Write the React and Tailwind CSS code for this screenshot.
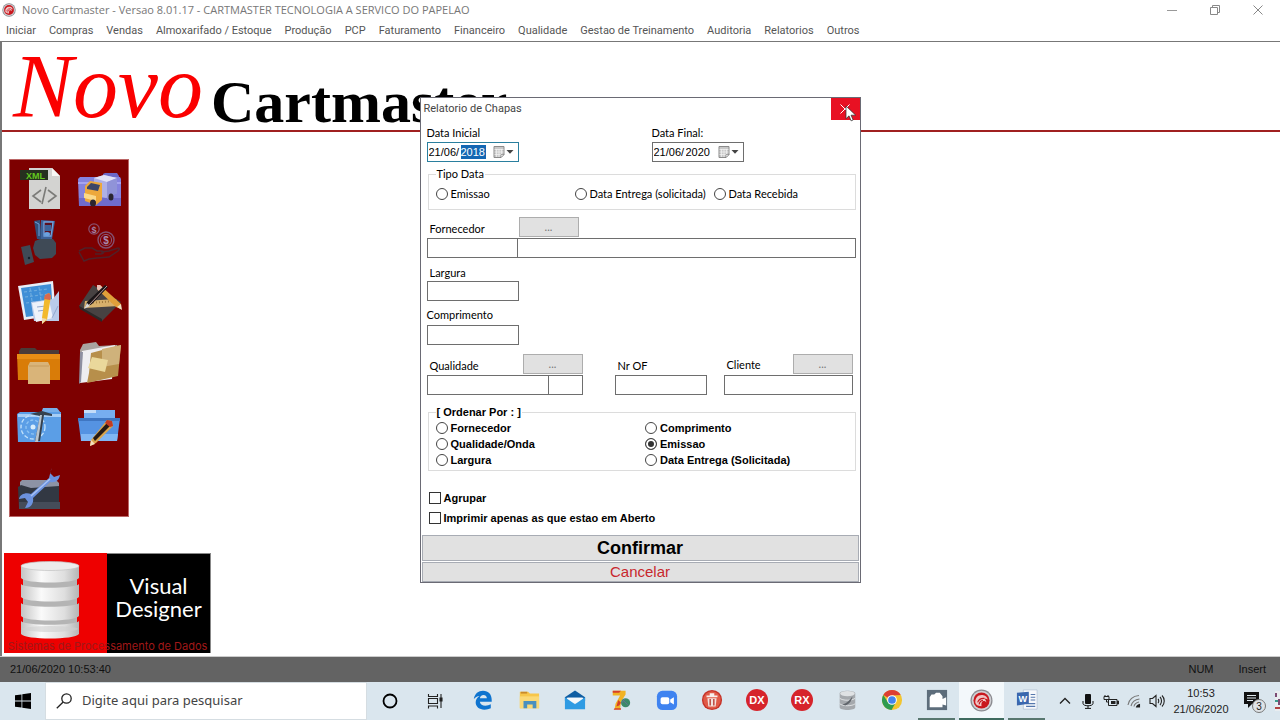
import React from "react";

const MENU = [
  "Iniciar", "Compras", "Vendas", "Almoxarifado / Estoque", "Produção", "PCP", "Faturamento",
  "Financeiro", "Qualidade", "Gestao de Treinamento", "Auditoria", "Relatorios", "Outros",
];

const UI_FONT = "font-['Open_Sans','Noto_Sans',sans-serif]";

/* ---------- application chrome ---------- */

function AppBadge({ className }) {
  return (
    <svg viewBox="0 0 24 24" className={className} aria-hidden="true">
      <circle cx="12" cy="12" r="11.500" fill="#8b8b90" />
      <circle cx="12" cy="12" r="10.200" fill="#d0d0d4" />
      <circle cx="12" cy="12" r="8.400" fill="#c9181e" />
      <path d="M5.500 14C5.500 8.500 9 5.500 14 6.500c2.500.5 4 2 4.500 4.500c-1.500-1-3-1.400-4.500-1c2 .6 3 2 3 4c-1-1.200-2.400-1.800-3.600-1.200c-1.200.6-1.800 2.200-1.400 5.200C8 17.500 6 16.500 5.500 14z" fill="#f0c6c6" />
      <path d="M8 14c1-3 3.500-4.500 7-4.200M9.500 16c.5-2.500 2-4 4-4.200" stroke="#c4161c" strokeWidth="1.200" fill="none" />
    </svg>
  );
}

function TitleBar() {
  return (
    <header className="flex h-5 items-center justify-between bg-white pl-0.5">
      <div className="flex items-center gap-1.5 text-[#777]">
        <AppBadge className="size-3.5" />
        <h1 className="text-[11px] leading-4">
          Novo Cartmaster - Versao 8.01.17 - CARTMASTER TECNOLOGIA A SERVICO DO PAPELAO
        </h1>
      </div>
      <div className="flex pr-px">
        <button aria-label="Minimizar" className="flex h-5 w-[43px] items-center justify-center">
          <svg viewBox="0 0 12 12" className="size-3"><path d="M1 6.500h10" stroke="#999" /></svg>
        </button>
        <button aria-label="Restaurar" className="flex h-5 w-[43px] items-center justify-center">
          <svg viewBox="0 0 12 12" className="size-3" fill="none" stroke="#888">
            <path d="M1.500 3.500h7v7h-7zM3.500 3.500v-2h7v7h-2" />
          </svg>
        </button>
        <button aria-label="Fechar" className="flex h-5 w-[43px] items-center justify-center">
          <svg viewBox="0 0 12 12" className="size-3"><path d="M1.500 1.500l9 9M10.500 1.500l-9 9" stroke="#888" /></svg>
        </button>
      </div>
    </header>
  );
}

function MenuBar() {
  return (
    <nav className="flex h-[21px] items-center gap-[13px] bg-white pl-1.5 font-[Roboto,sans-serif] text-[11px] text-[#555]">
      {MENU.map((m) => (
        <button key={m} className="whitespace-nowrap leading-4">{m}</button>
      ))}
    </nav>
  );
}

/* ---------- side panel ---------- */

const SIDE_ICONS = [
  ["XML", (
    <g>
      <path d="M19 8h23l8 8v33H19z" fill="#d3d3d1" />
      <path d="M42 8l8 8h-8z" fill="#f7f7f5" />
      <path d="M31 30l-8 6 8 6M38 30l8 6-8 6M36 27l-4 17" fill="none" stroke="#7b7b78" strokeWidth="1.600" />
      <rect x="10" y="10" width="28" height="10" fill="#26301f" />
      <text x="16" y="18.500" fontSize="9" fontWeight="700" fill="#63c81e">XML</text>
    </g>
  )],
  ["Entregas", (
    <g>
      <path d="M34 18v-4l2-1h12l2 3v3z" fill="#6c68c8" />
      <path d="M9 19l2-2h40l1 2v27H10z" fill="#8583de" />
      <path d="M9 22h43v2H9z" fill="#a6a4f0" />
      <path d="M10 38h42v8H10z" fill="#6f6ccc" />
      <path d="M25 18l10-3 13 3v15l-11 5-12-3z" fill="#aeb0e6" />
      <path d="M25 18l10-3 13 3-10 4z" fill="#e2e2f7" />
      <path d="M38 22v17l10-6V18z" fill="#9093d8" />
      <path d="M16 26l5-5 12 2v17l-6 5-11-4z" fill="#eda83c" />
      <path d="M18 27l4-4 9 2-2 6-11-2z" fill="#3d4667" />
      <path d="M15 33l12 3v5l-12-3z" fill="#fbd98a" />
      <ellipse cx="24" cy="43" rx="3" ry="3.500" fill="#2a2530" />
      <ellipse cx="42" cy="37" rx="2.500" ry="3.500" fill="#2a2530" />
    </g>
  )],
  ["Pagamentos", (
    <g>
      <path d="M24 2l6-1 2 19h-5z" fill="#31507c" />
      <path d="M25 3l4 2v12" fill="none" stroke="#6d9edb" />
      <path d="M31 1l14 1-3 18H31z" fill="#3c6299" />
      <path d="M34 3h9l-2 14h-7z" fill="#5c1020" stroke="#71a1db" strokeWidth="1.300" />
      <path d="M35 6h6v6h-6z" fill="#3c6299" />
      <ellipse cx="37" cy="15" rx="3" ry="2" fill="#69a2e2" />
      <path d="M25 22l5-2h13l3 4v11l-4 4-12 1-5-4-2-7z" fill="#3f4a56" />
      <path d="M11 28l9-2 4 17-9 3z" fill="#3f4a56" />
      <circle cx="19" cy="39" r="1.200" fill="#16202c" />
    </g>
  )],
  ["Recebimentos", (
    <g fill="none">
      <circle cx="25" cy="10" r="5.200" stroke="#8a4e6c" strokeWidth="1.200" />
      <text x="22.500" y="13.500" fontSize="9" fontWeight="700" fill="#a283a8">$</text>
      <circle cx="37" cy="21" r="8" stroke="#84506f" strokeWidth="1.400" />
      <circle cx="37" cy="21" r="5.600" stroke="#8a5676" />
      <text x="34.300" y="24.500" fontSize="10" fontWeight="700" fill="#a98cb0">$</text>
      <path d="M10 32l6-3h7l5 3h5c3 1 1 3-1 3h-6M32 33l8-1 9-3c2 0 1 2 0 3l-9 6-12 1-8 1-5 2-5-9" stroke="#4f2128" strokeWidth="1.500" />
    </g>
  )],
  ["Projetos", (
    <g>
      <path d="M8 8l35-5 3 34-32 5z" fill="#e9eff8" />
      <path d="M11 10l30-4 2 29-27 4z" fill="#3f8ed6" />
      <path d="M14 14l24-3M15 19l24-3M16 25l24-3M20 10l4 26M29 9l4 26" stroke="#6dacdf" strokeWidth="1.200" strokeDasharray="3 2" />
      <path d="M21 24l22-3 6-8v30H24z" fill="#b9cbea" />
      <path d="M22 25l17-3 4 18-17 4z" fill="#eef2fa" />
      <path d="M27 29l9-1M28 33l8-1M42 40l6-12" stroke="#91a8ce" />
      <path d="M35 17l4-2 2 3-4 24-5 4 0-6z" fill="#f2b92d" />
      <path d="M35 17l4-2 2 3-1 4-6-1z" fill="#d8694e" />
      <path d="M32 40l5 1-5 5z" fill="#eedab0" />
    </g>
  )],
  ["Desenho", (
    <g>
      <path d="M10 28L24 7l28 17-19 19z" fill="#474242" />
      <path d="M10 28l23 13v3L11 31z" fill="#2b2828" />
      <path d="M16 23l31-2 3 7-35 2z" fill="#d8b06b" />
      <path d="M18 25l30-2" stroke="#a07a3e" strokeDasharray="1 2" strokeWidth="2" />
      <path d="M28 7h3l21 19v5l-5-2L28 11z" fill="#e0a03a" />
      <path d="M28 7h3l3 3-4 3-2-2z" fill="#e9bdb3" />
      <path d="M48 29l4-3 1 6z" fill="#efe1c0" />
      <path d="M36 7l3 2-16 17-7 4 2-6z" fill="#1a1517" />
      <path d="M38 8L20 27" stroke="#b99a98" strokeWidth="1" />
      <path d="M15 31l3-6 3 3z" fill="#d8d8d8" />
    </g>
  )],
  ["Estoque", (
    <g>
      <path d="M9 14l2-3h14l2 2h22v6H9z" fill="#4a3b38" />
      <path d="M7 17h43v26H8z" fill="#d97c08" />
      <path d="M7 17h43v5H7z" fill="#e88d14" />
      <path d="M20 25h18l2 4v18H18V29z" fill="#d9b479" />
      <path d="M19 29h20" stroke="#c59c5e" strokeWidth="1" />
    </g>
  )],
  ["Arquivos", (
    <g>
      <path d="M11 13l3-6 13-2 3 4 18-1 2 4-38 30z" fill="#a9a4a0" />
      <path d="M13 14l33-6-3 34-32 4z" fill="#eeeef1" />
      <path d="M22 16l30-8-3 31-31 7 2-10z" fill="#b78f4b" />
      <path d="M33 12l19-4-2 19-17 3z" fill="#cfb27b" />
      <path d="M23 20l16 3-3 12-17-4z" fill="#ead89b" />
      <path d="M11 15h3l-2 30-2 2z" fill="#8d8fa0" />
    </g>
  )],
  ["Aplicativos", (
    <g>
      <path d="M31 17l2-5h14l4 5z" fill="#77aee8" />
      <path d="M7 18l3-2h41v30H8z" fill="#5b9ee6" />
      <path d="M8 18h43v3H8z" fill="#a6cdf5" />
      <circle cx="23" cy="31" r="12" fill="none" stroke="#bfe0fb" strokeWidth="1.400" strokeDasharray="4 2" />
      <circle cx="23" cy="31" r="7" fill="none" stroke="#8fc4f3" strokeWidth="1.400" strokeDasharray="3 2" />
      <circle cx="23" cy="31" r="2.500" fill="#d8edfc" />
      <path d="M20 18l12-3 10 3v2l-8-1-4 26h-5l5-25z" fill="#36414e" />
      <path d="M32 19l-4 27h-3l5-27z" fill="#b8c4cf" />
    </g>
  )],
  ["Editar", (
    <g>
      <path d="M15 14h31v12H15z" fill="#77aef0" />
      <path d="M15 14h12v3H15z" fill="#c4dcf8" />
      <path d="M9 22h42l-3 23H12z" fill="#5593e2" />
      <path d="M9 22h42v3H9z" fill="#3f76c2" />
      <path d="M12 38h37l-1 7H12z" fill="#80b6f3" />
      <path d="M38 24l5 1 1 5-17 17-6 3 1-6z" fill="#dba54b" />
      <path d="M38 27l3 3-15 15-2-3z" fill="#251b15" />
      <path d="M38 24l5 1 1 5-3 1-5-4z" fill="#c23b24" />
      <path d="M22 44l4 4-5 2z" fill="#f3dfba" />
    </g>
  )],
  ["Ferramentas", (
    <g>
      <path d="M10 27l2-2h34l3 3v7H10z" fill="#8d93a5" />
      <path d="M8 32l3-2 10 3 28-2v23H9z" fill="#323843" />
      <path d="M9 47h41v7H9z" fill="#454c59" />
      <path d="M41 15l-2 8-18 16c-5-2-11 0-12 5l6-1 3 4-3 6c6 0 9-5 8-10l17-16c6 1 9-2 10-7l-6 2-4-4 2-5z" fill="#6c92df" />
      <path d="M40 24L21 41" stroke="#a9c2f3" strokeWidth="1.500" />
    </g>
  )],
];

function SidePanel() {
  return (
    <aside className="ml-[7px] mt-[27px] w-[120px] border border-[#b66] bg-[#7d0000] pb-0.5">
      <div className="grid grid-cols-2">
        {SIDE_ICONS.map(([label, art]) => (
          <button key={label} aria-label={label}>
            <svg viewBox="0 0 59 59" className="block size-[59px]" fontFamily="Liberation Sans, sans-serif">{art}</svg>
          </button>
        ))}
      </div>
    </aside>
  );
}

const DISKS = [2, 21, 40, 58];

function VendorLogo() {
  return (
    <div className="relative ml-0.5 mt-9 flex h-[100px] w-[207px]">
      <div className="flex w-[103px] justify-center bg-[#ee0000] pr-3 pt-2">
        <svg viewBox="0 0 60 78" className="h-[78px] w-[60px]" aria-hidden="true">
          <defs>
            <linearGradient id="cyl" x1="0" x2="1" y1="0" y2="0">
              <stop offset="0" stopColor="#c4c4c4" />
              <stop offset="0.350" stopColor="#fafafa" />
              <stop offset="0.750" stopColor="#dedede" />
              <stop offset="1" stopColor="#b5b5b5" />
            </linearGradient>
          </defs>
          <path d="M3 6h54v64H3z" fill="#b4b4b4" />
          {DISKS.map((y) => (
            <path key={y} d={`M1 ${y + 2}v13c4 6 54 6 58 0v-13c-4 5-54 5-58 0z`} fill="url(#cyl)" />
          ))}
          <ellipse cx="30" cy="5" rx="29" ry="4.500" fill="#ececec" stroke="#c2c2c2" strokeWidth="0.700" />
          <ellipse cx="30" cy="68" rx="28" ry="3" fill="#cfcfcf" opacity="0.600" />
        </svg>
      </div>
      <div className="flex-1 border-r border-t border-[#888] bg-black pt-5 text-center font-[Lato,sans-serif] text-[22px] leading-[23px] text-white">
        Visual<br />Designer
      </div>
      <p className="absolute inset-x-0 bottom-0 whitespace-nowrap text-center font-[Inter,sans-serif] text-[11px] leading-[14px] text-[#a01818]">
        Sistemas de Processamento de Dados
      </p>
    </div>
  );
}

/* ---------- report dialog ---------- */

const BOX = "h-5 border border-[#6e6e6e] bg-white px-1 outline-none";

function LookupButton({ label }) {
  return (
    <button aria-label={label} className="h-5 w-[60px] border border-[#adadad] bg-[#e1e1e1] text-[11px] leading-4 text-[#777]">
      ...
    </button>
  );
}

function DateField({ id, label, year, active }) {
  return (
    <div>
      <label htmlFor={id} className="block pb-0.5 leading-[14px]">{label}</label>
      <div className={`flex h-5 w-[92px] items-center border bg-white pl-px font-['Liberation_Sans',sans-serif] ${active ? "border-[#2a7f9e]" : "border-[#6e6e6e]"}`}>
        <input id={id} defaultValue="21/06/" className="w-8 outline-none" />
        <input
          aria-label={`${label} ano`}
          defaultValue={year}
          className={`h-3.5 w-[25px] outline-none ${active ? "bg-[#1467b3] text-white" : ""}`}
        />
        <button aria-label="Abrir calendario" className="ml-[7px] flex items-center gap-px">
          <svg viewBox="0 0 12 12" className="size-3">
            <path d="M1 .5h10v8l-3 3H1z" fill="#c9c9c9" stroke="#8b8b8b" />
            <path d="M1.500 3.500h9M1.500 6h9M1.500 8.500h7M3.500 3v8M6 3v8M8.500 3v6" stroke="#f3f3f3" strokeWidth="0.700" />
            <path d="M8 11.500v-3h3z" fill="#fff" stroke="#777" strokeWidth="0.600" />
          </svg>
          <svg viewBox="0 0 8 8" className="size-2"><path d="M.5 2h7L4 5.800z" fill="#444" /></svg>
        </button>
      </div>
    </div>
  );
}

function Radio({ name, children, defaultChecked, className = "" }) {
  return (
    <label className={`flex h-4 items-center gap-[3px] whitespace-nowrap ${className}`}>
      <input
        type="radio"
        name={name}
        defaultChecked={defaultChecked}
        className="size-3 shrink-0 appearance-none rounded-full border border-[#444] bg-white checked:bg-[#333] checked:shadow-[inset_0_0_0_2px_#fff]"
      />
      {children}
    </label>
  );
}

function Check({ children }) {
  return (
    <label className="flex h-5 items-center gap-[3px]">
      <input type="checkbox" className="size-3 appearance-none border border-[#333] bg-white checked:bg-[#333]" />
      {children}
    </label>
  );
}

function ReportDialog() {
  return (
    <section role="dialog" aria-label="Relatorio de Chapas" className="w-[441px] border border-[#6a6a74] bg-white font-[Lato,sans-serif] text-[11px] leading-[14px] text-black">
      <div className="flex h-[22px] items-center justify-between">
        <h2 className="pl-[3px] font-[Roboto,sans-serif] text-[11px] text-[#444]">Relatorio de Chapas</h2>
        <button aria-label="Fechar janela" className="relative flex h-[22px] w-[29px] items-center justify-center bg-[#e81123]">
          <svg viewBox="0 0 10 10" className="size-2.5"><path d="M.5 .5l9 9M9.500 .5l-9 9" stroke="#fff" /></svg>
          <svg viewBox="0 0 12 18" className="absolute left-[14px] top-[7px] h-[17px] w-3" aria-hidden="true">
            <path d="M.7 1v13.500l3.200-3 2.200 5.300 2.200-1-2.200-5H11z" fill="#fff" stroke="#333" strokeWidth="0.800" />
          </svg>
        </button>
      </div>

      <form className="flex flex-col pl-1.5 pr-1 pt-1.5" onSubmit={(e) => e.preventDefault()}>
        <div className="flex gap-[133px]">
          <DateField id="ini" label="Data Inicial" year="2018" active />
          <DateField id="fim" label="Data Final:" year="2020" />
        </div>

        <fieldset className="ml-px mt-[5px] h-[43px] border border-[#dcdcdc] pl-[7px]">
          <legend className="px-px">Tipo Data</legend>
          <div className="flex pt-[5px]">
            <Radio name="tipo" className="w-[139px]">Emissao</Radio>
            <Radio name="tipo" className="w-[139px]">Data Entrega (solicitada)</Radio>
            <Radio name="tipo">Data Recebida</Radio>
          </div>
        </fieldset>

        <div className="mt-[7px] flex h-[21px]">
          <label htmlFor="forn" className="w-[92px] pl-[3px] pt-[5px]">Fornecedor</label>
          <LookupButton label="Buscar fornecedor" />
        </div>
        <div className="flex">
          <input id="forn" className={`${BOX} w-[91px]`} />
          <input aria-label="Nome do fornecedor" className={`${BOX} -ml-px min-w-0 flex-1`} />
        </div>

        <label htmlFor="larg" className="mt-2 pb-px pl-[3px]">Largura</label>
        <input id="larg" className={`${BOX} w-[92px]`} />

        <label htmlFor="comp" className="mt-[7px] pb-[3px]">Comprimento</label>
        <input id="comp" className={`${BOX} w-[92px]`} />

        <div className="mt-[9px] flex">
          <div className="w-[188px]">
            <div className="flex h-[21px] w-[156px] justify-between">
              <label htmlFor="qual" className="pl-[3px] pt-[5px]">Qualidade</label>
              <LookupButton label="Buscar qualidade" />
            </div>
            <div className="flex w-[156px]">
              <input id="qual" className={`${BOX} w-[122px]`} />
              <input aria-label="Onda" className={`${BOX} -ml-px min-w-0 flex-1`} />
            </div>
          </div>
          <div className="w-[109px]">
            <label htmlFor="of" className="block h-[21px] pl-[3px] pt-[5px]">Nr OF</label>
            <input id="of" className={`${BOX} w-[92px]`} />
          </div>
          <div className="w-[129px]">
            <div className="flex h-[21px] justify-between">
              <label htmlFor="cli" className="pl-[3px] pt-1">Cliente</label>
              <LookupButton label="Buscar cliente" />
            </div>
            <input id="cli" className={`${BOX} w-full`} />
          </div>
        </div>

        <fieldset className="ml-px mt-2.5 h-[66px] border border-[#dcdcdc] pl-[7px] font-['Liberation_Sans',sans-serif] font-bold">
          <legend className="px-px">[ Ordenar Por : ]</legend>
          <div className="grid grid-cols-2 pt-px">
            <Radio name="ord">Fornecedor</Radio>
            <Radio name="ord">Comprimento</Radio>
            <Radio name="ord">Qualidade/Onda</Radio>
            <Radio name="ord" defaultChecked>Emissao</Radio>
            <Radio name="ord">Largura</Radio>
            <Radio name="ord">Data Entrega (Solicitada)</Radio>
          </div>
        </fieldset>

        <div className="mt-[17px] pb-[7px] pl-0.5 font-['Liberation_Sans',sans-serif] font-bold">
          <Check>Agrupar</Check>
          <Check>Imprimir apenas as que estao em Aberto</Check>
        </div>
      </form>

      <div className="flex flex-col gap-px px-px font-['Liberation_Sans',sans-serif]">
        <button className="h-[26px] border border-[#a8acb4] bg-[#e1e1e1] text-[18px] font-bold leading-6">Confirmar</button>
        <button className="h-5 border border-[#a8acb4] bg-[#e1e1e1] text-[15px] leading-[18px] text-[#c8282d]">Cancelar</button>
      </div>
    </section>
  );
}

/* ---------- task bar ---------- */

const LAUNCHERS = [
  ["Edge", (
    <path d="M2 11C3 5 7 2 12 2c6 0 9.500 4 9.500 10v2H8.500c.5 3 3 4.300 6 4.300 2.300 0 4.300-.6 6-1.600v4.300c-2 1-4.300 1.500-7 1.500C8 22.500 4 19.500 4 14.500c0-3 1.600-5.500 4.200-7C5.500 7.800 3.500 9 2 11zm6.600-.8h7.600c0-2.300-1.300-3.700-3.600-3.700S8.900 8 8.600 10.200z" fill="#0f74cf" />
  )],
  ["Explorador", (
    <g>
      <path d="M2 3h9l2 2h10v16H2z" fill="#f7c64a" /><path d="M3 3h7v2H3z" fill="#c98a2b" />
      <path d="M2 8h21v13H2z" fill="#fbd976" />
      <path d="M6 13h14v8h-4v-4h-6v4H6z" fill="#4a90bf" />
    </g>
  )],
  ["Email", (
    <g>
      <path d="M1 9L12 1.500 23 9v4H1z" fill="#0f5da2" /><path d="M3 9.500h18V15H3z" fill="#f5f8fb" />
      <path d="M1 9l11 7.500L23 9v13H1z" fill="#2f9be3" /><path d="M4 9.500h16l-8 6z" fill="#f5f8fb" />
    </g>
  )],
  ["Sete", (
    <g>
      <path d="M3 2h14v4l-5 8-1 8H5l1-6 5-9H3z" fill="#f1b323" />
      <path d="M3 2h9l-2 2H3zM9 12l3 3-2 3-3 1zM5 21h7v1.500H4z" fill="#d6402a" />
      <circle cx="17" cy="15" r="5" fill="#3d8a69" /><path d="M14 12l6 6M16 11l-3 4" stroke="#6a6f98" />
    </g>
  )],
];

const APPS = [
  ["Zoom", (
    <g>
      <rect x="1" y="2" width="22" height="21" rx="6" fill="#3f83f0" />
      <rect x="5" y="9" width="9.500" height="7.500" rx="2" fill="#fff" /><path d="M15.500 11.500l4-2.500v8l-4-2.500z" fill="#fff" />
    </g>
  )],
  ["Lixeira", (
    <g>
      <circle cx="12" cy="12" r="11" fill="#c53127" /><circle cx="12" cy="12" r="9.500" fill="#e05a47" />
      <path d="M6 7h12v2H6zM9.500 4.500h5V7h-5z" fill="#f7efec" />
      <path d="M7 10h10l-1 9H8z" fill="#f3e2dd" /><path d="M10 11v7M14 11v7" stroke="#b63a30" strokeWidth="1.500" />
    </g>
  )],
  ["DX", (
    <g>
      <circle cx="12" cy="12" r="12" fill="#d6242b" />
      <text x="12" y="16" textAnchor="middle" fontSize="12" fontWeight="700" fill="#fff">DX</text>
    </g>
  )],
  ["RX", (
    <g>
      <circle cx="12" cy="12" r="12" fill="#d6242b" />
      <text x="12" y="16" textAnchor="middle" fontSize="12" fontWeight="700" fill="#fff">RX</text>
    </g>
  )],
  ["Banco de dados", (
    <g>
      <path d="M4 5c0-4 17-4 17 0v15c0 4-17 4-17 0z" fill="#a5a9ad" />
      <ellipse cx="12.500" cy="5" rx="8" ry="2.800" fill="#dfe2e4" />
      <path d="M4 10c3 3 14 3 17 0M4 16c3 3 14 3 17 0" stroke="#e3e5e7" fill="none" />
      <path d="M7 17c4-1 8-4 11-9-1 6-4 9-8 10z" fill="#60656b" />
    </g>
  )],
  ["Chrome", (
    <g>
      <circle cx="12" cy="12" r="11" fill="#f2c52f" />
      <path d="M12 12L2.500 6.500A11 11 0 0 1 21.500 6.500L12 7z" fill="#dc3f33" />
      <path d="M2.500 6.500A11 11 0 0 0 11.500 23L16.500 14 12 12 7.500 14.500z" fill="#2e9b50" />
      <circle cx="12" cy="12" r="5.300" fill="#fff" /><circle cx="12" cy="12" r="4.200" fill="#4384ee" />
    </g>
  )],
  ["Gravador", (
    <g>
      <path d="M1 1h22v22H1z" fill="#5d6d7b" />
      <path d="M4 9l2-3h3l2-2h4l3 4v3l4-2v9l-4-1v3H4z" fill="#fff" />
    </g>
  ), "run"],
  ["Cartmaster", null, "active"],
  ["Word", (
    <g>
      <path d="M8 1h15v21H8z" fill="#f6f8fb" stroke="#a9b8d0" strokeWidth="0.700" />
      <path d="M16 6h5M16 9h5M16 12h5M11 16h10M11 19h10" stroke="#5577ad" strokeWidth="1.300" />
      <path d="M1 4l13-1v13L1 18z" fill="#3b67ae" />
      <text x="7.500" y="14" textAnchor="middle" fontSize="10" fontWeight="700" fill="#fff">W</text>
    </g>
  ), "run"],
];

const STATE = {
  run: "border-b-2 border-[#58776f]",
  active: "border-b-2 border-[#3f6b5f] bg-[#f3f8fb]",
};

function TaskButton({ label, art, state, width }) {
  const pad = state === "active" ? "" : "px-1";
  return (
    <button aria-label={label} className={`flex h-full items-center justify-center ${pad} ${width}`}>
      <span className={`flex h-full w-full items-center justify-center ${STATE[state] || "border-b-2 border-transparent"}`}>
        {art ? (
          <svg viewBox="0 0 24 24" className="size-[22px]" fontFamily="Liberation Sans, sans-serif">{art}</svg>
        ) : (
          <AppBadge className="size-[23px]" />
        )}
      </span>
    </button>
  );
}

function TaskBar() {
  return (
    <footer className="flex h-[38px] items-stretch bg-[#dae6ee] text-[#222]">
      <button aria-label="Iniciar Windows" className="flex w-[45px] items-center justify-center">
        <svg viewBox="0 0 16 16" className="size-4"><path d="M0 2.300l6.500-.9v6.200H0zM7.300 1.300L16 0v7.600H7.300zM0 8.400h6.500v6.200L0 13.700zM7.300 8.400H16V16l-8.700-1.300z" fill="#000" /></svg>
      </button>
      <label className="flex w-[322px] items-center gap-2.5 border border-[#d5dde2] bg-white pl-2.5">
        <svg viewBox="0 0 16 16" className="size-4 shrink-0" fill="none" stroke="#222" strokeWidth="1.300">
          <circle cx="10.500" cy="5.500" r="4.700" /><path d="M7.200 9L.8 15.300" />
        </svg>
        <input
          aria-label="Pesquisar"
          placeholder="Digite aqui para pesquisar"
          className="min-w-0 flex-1 font-['Noto_Sans',sans-serif] text-[13px] outline-none placeholder:text-[#444]"
        />
      </label>
      <button aria-label="Cortana" className="flex w-[46px] items-center justify-center">
        <svg viewBox="0 0 16 16" className="size-4"><circle cx="8" cy="8" r="6.500" fill="none" stroke="#000" strokeWidth="1.800" /></svg>
      </button>
      <button aria-label="Visao de tarefas" className="mr-[3px] flex w-11 items-center justify-center">
        <svg viewBox="0 0 16 16" className="size-4" fill="none" stroke="#222" strokeWidth="1.100">
          <path d="M1.500 1v2.500h9V1M1.500 5.500h9v5h-9zM1.500 15.500V13h9v2.500M14 1v14" /><path d="M13 5h2v3h-2z" fill="#222" />
        </svg>
      </button>
      {LAUNCHERS.map(([label, art]) => (
        <TaskButton key={label} label={label} art={art} width="w-[46px]" />
      ))}
      {APPS.map(([label, art, state]) => (
        <TaskButton key={label} label={label} art={art} state={state} width="w-[45px]" />
      ))}

      <div className="ml-auto flex items-center">
        <button aria-label="Mostrar icones ocultos" className="mr-2.5">
          <svg viewBox="0 0 12 12" className="size-3"><path d="M1 8.500l5-5 5 5" fill="none" stroke="#222" strokeWidth="1.300" /></svg>
        </button>
        <svg viewBox="0 0 14 16" className="mr-2 h-4 w-3.5" aria-label="Microfone">
          <rect x="4" y="1" width="6" height="10" rx="1" fill="#111" />
          <path d="M2 8v2.500c0 3 10 3 10 0V8M7 13v2M4 15.400h6" fill="none" stroke="#111" />
        </svg>
        <svg viewBox="0 0 16 14" className="mr-2 h-3.5 w-4" aria-label="Bateria">
          <path d="M5.500 5.500h8.500v6H5.500zM14.500 7h1v3h-1z" fill="none" stroke="#222" /><path d="M8 7h4.500v3H8z" fill="#222" />
          <path d="M1 2.500h5v3H1zM2 1v2M5 1v2M3.500 5v3h2" fill="none" stroke="#222" />
        </svg>
        <svg viewBox="0 0 14 14" className="mr-2 size-3.5" aria-label="Rede" fill="none" stroke="#777" strokeWidth="1.100">
          <path d="M1 11C2 5.500 6 2 12 1.500M4 12c1-4 4-6.500 8.500-7M7 12.500c.5-2.500 2.500-4 5-4.500" /><path d="M9.500 13c.3-1.500 1.300-2.200 3-2.500v2.500z" fill="#222" stroke="#222" />
        </svg>
        <svg viewBox="0 0 16 14" className="mr-2 h-3.5 w-4" aria-label="Volume" fill="none" stroke="#222" strokeWidth="1.100">
          <path d="M1 4.500h2.500L7 1.500v11L3.500 9.500H1zM9 5c1 1 1 3 0 4M11 3c2 2 2 6 0 8M13 1.500c3 3 3 8 0 11" />
        </svg>
        <div className="w-14 text-center font-['Liberation_Sans',sans-serif] text-[11px] leading-4">
          <time className="block">10:53</time>
          <time className="block">21/06/2020</time>
        </div>
        <button aria-label="Notificacoes" className="ml-3.5 mr-2">
          <svg viewBox="0 0 24 24" className="size-6" fontFamily="Liberation Sans, sans-serif">
            <path d="M1 3h15v12H9l-4 4v-4H1z" fill="#111" /><path d="M4 6.500h9M4 9h9M4 11.500h6" stroke="#dfe9ef" />
            <circle cx="16" cy="17" r="6.500" fill="#dfe3e6" stroke="#777" />
            <text x="16" y="20.500" textAnchor="middle" fontSize="10" fill="#222">3</text>
          </svg>
        </button>
        <svg viewBox="0 0 5 20" className="h-5 w-[5px]" aria-hidden="true">
          <path d="M0 0h5v20H0z" fill="#e9edf0" /><path d="M0 2h2v4H0zM3 8h2v6H3z" fill="#7c4b74" /><path d="M0 9h3v2H0z" fill="#3b9a8a" /><path d="M0 16h5v2H0z" fill="#b04343" />
        </svg>
      </div>
    </footer>
  );
}

export default function App() {
  return (
    <div className={`relative flex min-h-screen flex-col overflow-hidden bg-white ${UI_FONT}`}>
      <TitleBar />
      <MenuBar />
      <main className="flex-1 border-l-2 border-t border-[#777] bg-white pb-[3px]">
        <div className="flex h-[90px] items-start border-b-2 border-[#a02020] pl-[11px] font-['Liberation_Serif',serif]">
          <span className="text-[90px] italic leading-[90px] text-[#fb0000]">Novo</span>
          <span className="ml-2 pt-[30px] text-[60px] font-bold leading-[60px] text-black">Cartmaster</span>
        </div>
        <SidePanel />
        <VendorLogo />
      </main>
      <div className="flex h-[26px] items-center border-t border-[#ccc] bg-[#636363] pl-2.5 pr-3.5 font-['Liberation_Sans',sans-serif] text-[11px] text-[#111]">
        <span className="flex-1">21/06/2020 10:53:40</span>
        <span className="w-[50px]">NUM</span>
        <span>Insert</span>
      </div>
      <TaskBar />
      <div className="absolute inset-x-0 top-[97px] flex justify-center">
        <ReportDialog />
      </div>
    </div>
  );
}
